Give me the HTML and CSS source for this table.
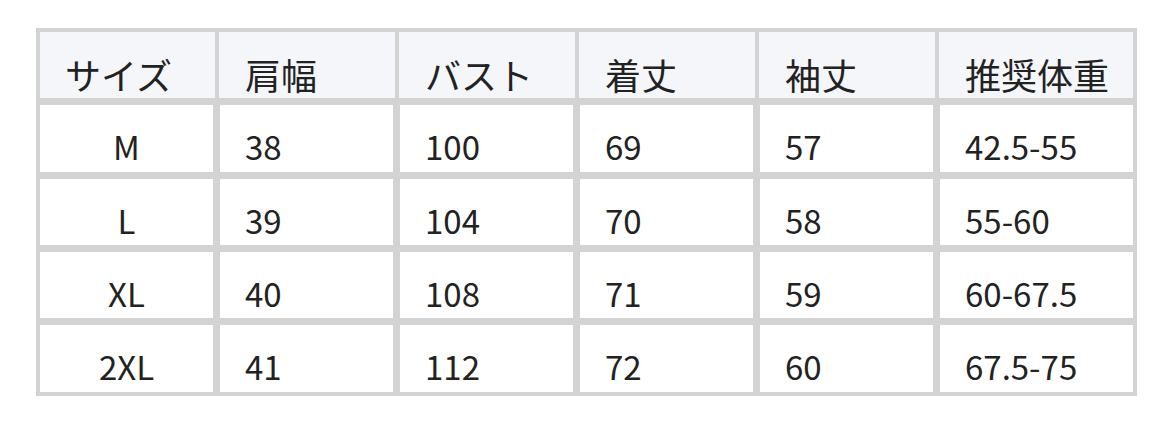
FILE: index.html
```html
<!DOCTYPE html>
<html lang="ja">
<head>
<meta charset="utf-8">
<title>サイズ表</title>
<link rel="stylesheet" href="styles.css">
</head>
<body>
<div class="size-table">
  <div class="cell head first">サイズ</div>
  <div class="cell head">肩幅</div>
  <div class="cell head">バスト</div>
  <div class="cell head">着丈</div>
  <div class="cell head">袖丈</div>
  <div class="cell head last">推奨体重</div>

  <div class="cell size">M</div>
  <div class="cell">38</div>
  <div class="cell">100</div>
  <div class="cell">69</div>
  <div class="cell">57</div>
  <div class="cell">42.5-55</div>

  <div class="cell size">L</div>
  <div class="cell">39</div>
  <div class="cell">104</div>
  <div class="cell">70</div>
  <div class="cell">58</div>
  <div class="cell">55-60</div>

  <div class="cell size">XL</div>
  <div class="cell">40</div>
  <div class="cell">108</div>
  <div class="cell">71</div>
  <div class="cell">59</div>
  <div class="cell">60-67.5</div>

  <div class="cell size">2XL</div>
  <div class="cell">41</div>
  <div class="cell">112</div>
  <div class="cell">72</div>
  <div class="cell">60</div>
  <div class="cell">67.5-75</div>
</div>
</body>
</html>
```

FILE: styles.css
```css
html, body {
  margin: 0;
  padding: 0;
  background: #ffffff;
}

body {
  font-family: "Noto Sans CJK JP", "Noto Sans", sans-serif;
  color: #222222;
}

.size-table {
  display: grid;
  grid-template-columns: 173px 173px 173px 173px 173px 193px;
  grid-template-rows: 66px 67px 66px 66px 67px;
  gap: 7px;
  width: 1093px;
  margin: 28px 0 0 36px;
  border: 4px solid #d3d3d3;
  background: #d3d3d3;
}

.cell {
  box-sizing: border-box;
  background: #ffffff;
  font-size: 33px;
  line-height: 33px;
  padding: 25px 0 0 25px;
  white-space: nowrap;
}

.cell.head {
  background: #f5f6fa;
  font-size: 36px;
  line-height: 36px;
  padding-top: 24px;
  margin: 0 -2px 0 -1px;
  padding-left: 26px;
}

.cell.head.first {
  margin-left: 0;
  padding-left: 25px;
}

.cell.head.last {
  margin-right: 0;
}

.cell.size {
  padding-left: 0;
  text-align: center;
}
```
